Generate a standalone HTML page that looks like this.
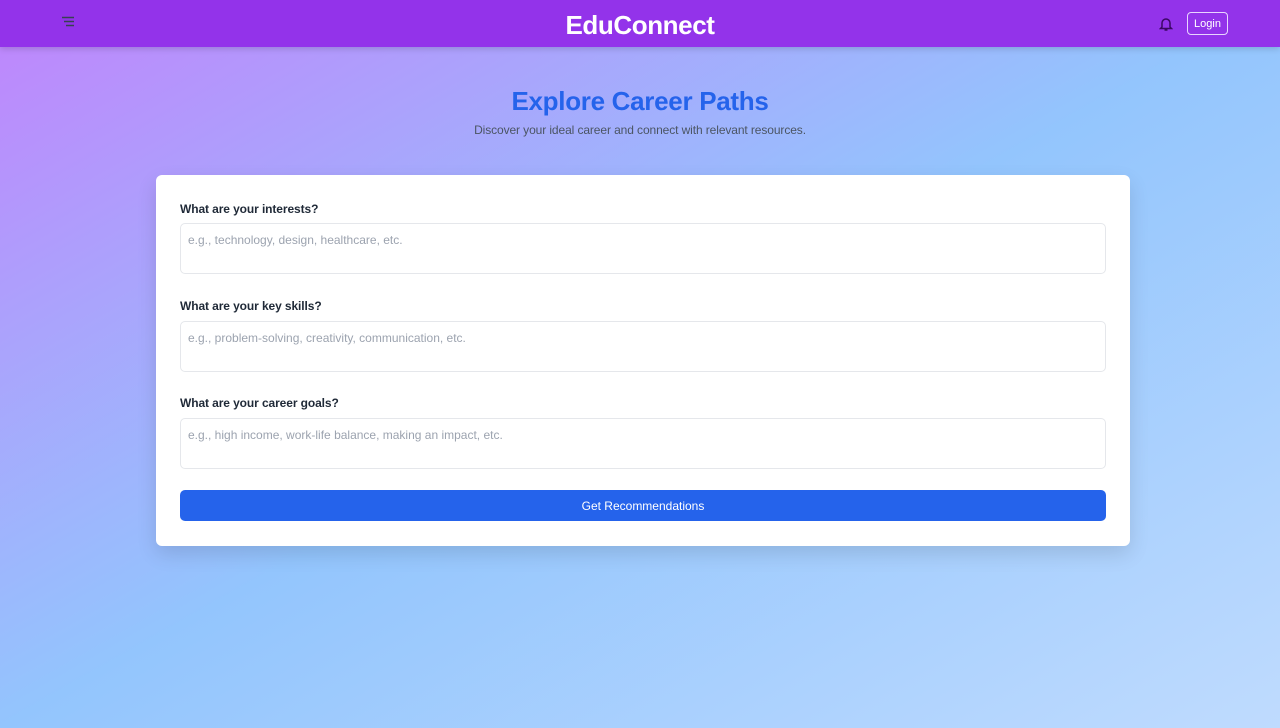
<!DOCTYPE html>
<html><head><meta charset="utf-8"><style>
*{box-sizing:border-box;margin:0;padding:0}
body{width:1280px;height:728px;overflow:hidden;font-family:"Liberation Sans",sans-serif;background:linear-gradient(to bottom right,#c084fc 0%,#93c5fd 50%,#bfdbfe 100%)}
header{height:47px;background:#9333ea;position:relative;box-shadow:0 2px 6px rgba(0,0,0,.15)}
.logo{position:absolute;left:0;right:0;top:10px;text-align:center;color:#fff;font-weight:bold;font-size:26px;letter-spacing:-0.4px}
.menu{position:absolute;left:61px;top:16px}
.bell{position:absolute;left:1159px;top:16px}
.login{position:absolute;left:1187px;top:12px;width:41px;height:23px;border:1px solid #e9d5ff;border-radius:4px;color:#fff;font-size:11px;text-align:center;line-height:23px}
h1{position:absolute;top:86px;width:100%;text-align:center;color:#2563eb;font-size:26px;font-weight:bold;letter-spacing:-0.3px}
.sub{position:absolute;top:123px;width:100%;text-align:center;color:#4b5563;font-size:12px;letter-spacing:-0.1px}
.card{position:absolute;left:156px;top:175px;width:974px;height:371px;background:#fff;border-radius:6px;box-shadow:0 8px 20px rgba(0,0,0,.12)}
label{position:absolute;left:24px;font-size:12px;font-weight:bold;color:#1f2937;letter-spacing:-0.1px}
.ta{position:absolute;left:24px;width:926px;height:51px;border:1px solid #e5e7eb;border-radius:5px;font-size:12px;color:#9ca3af;padding:9px 7px}
.btn{position:absolute;left:24px;top:315px;width:926px;height:31px;background:#2563eb;border-radius:5px;color:#fff;font-size:12px;text-align:center;line-height:32px}
</style></head><body>
<header>
<svg class="menu" width="14" height="12" viewBox="0 0 14 12"><path d="M1 1.5h12M3 5.5h10M5 9.5h8" stroke="#374151" stroke-width="1.6"/></svg>
<div class="logo">EduConnect</div>
<svg class="bell" width="14" height="16" viewBox="0 0 14 16"><path d="M3 11V7a4 4 0 0 1 8 0v4l1.5 1.5h-11zM5.5 14h3" fill="none" stroke="#3b0764" stroke-width="1.5"/></svg>
<div class="login">Login</div>
</header>
<h1>Explore Career Paths</h1>
<div class="sub">Discover your ideal career and connect with relevant resources.</div>
<div class="card">
<label style="top:27px">What are your interests?</label>
<div class="ta" style="top:48px">e.g., technology, design, healthcare, etc.</div>
<label style="top:124px">What are your key skills?</label>
<div class="ta" style="top:146px">e.g., problem-solving, creativity, communication, etc.</div>
<label style="top:221px">What are your career goals?</label>
<div class="ta" style="top:243px">e.g., high income, work-life balance, making an impact, etc.</div>
<div class="btn">Get Recommendations</div>
</div>
</body></html>
